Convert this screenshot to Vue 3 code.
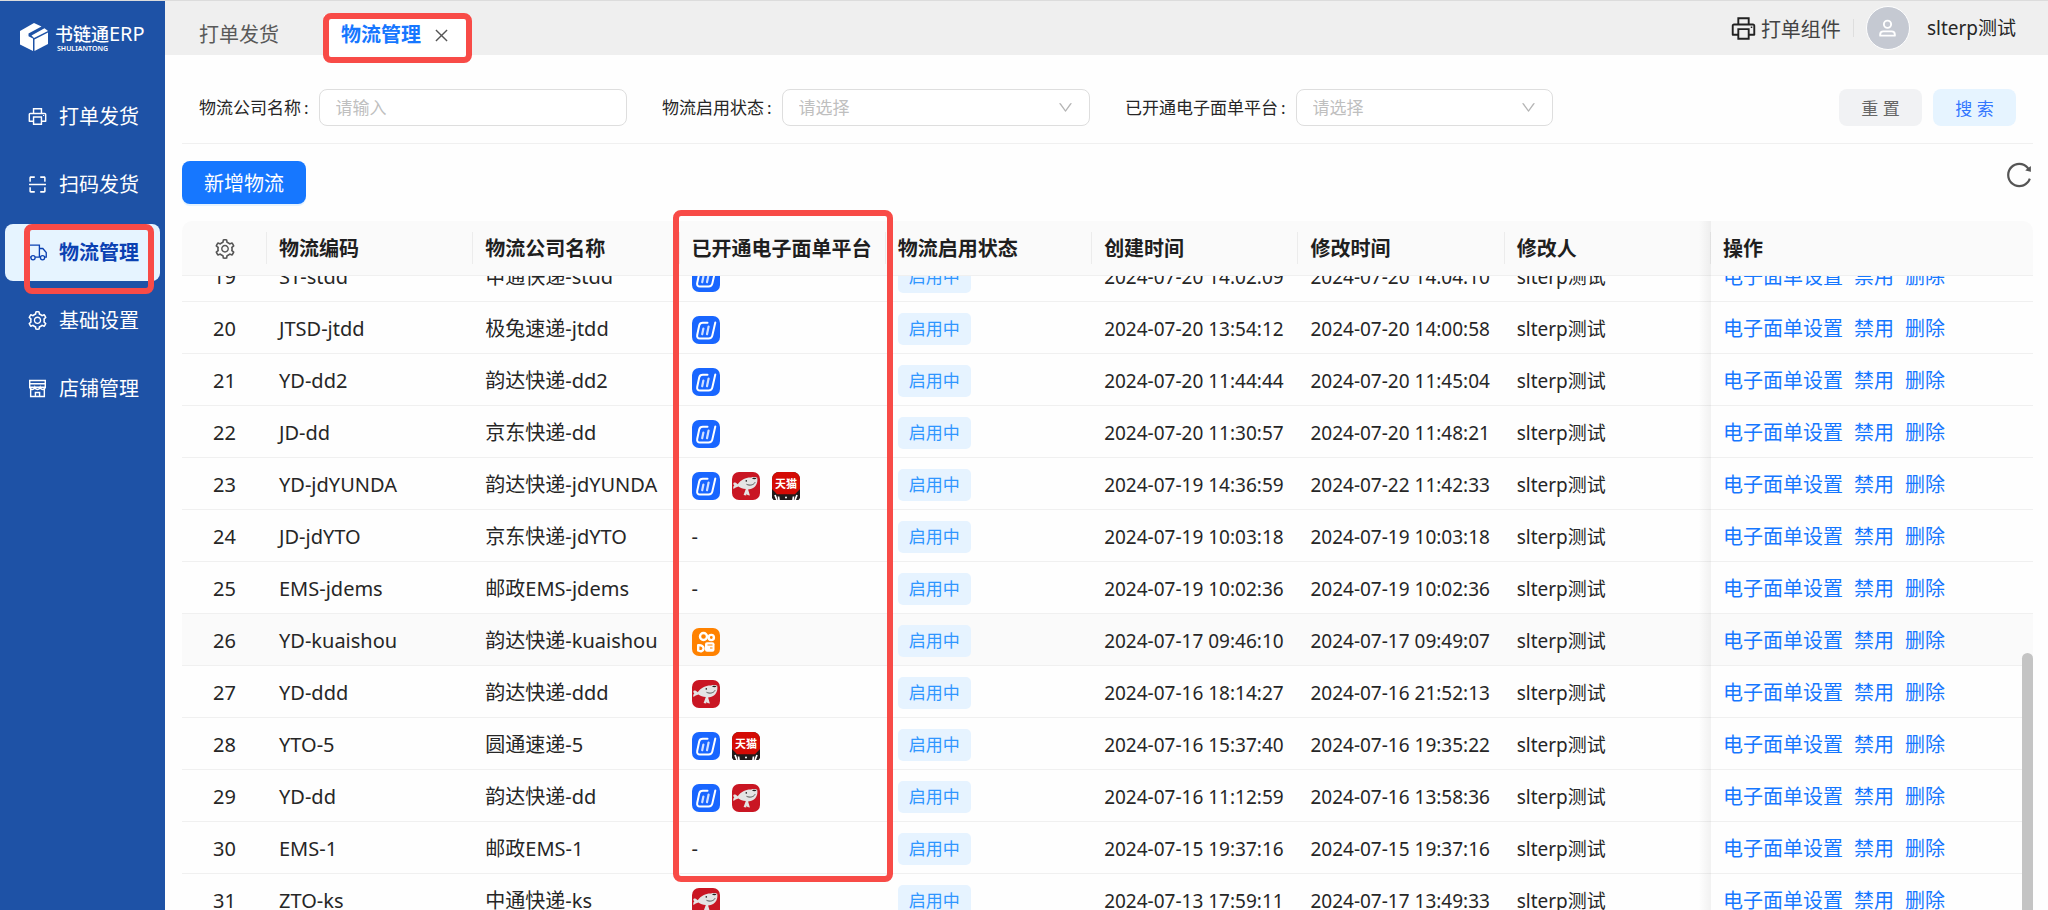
<script setup>
import { ref, onMounted } from 'vue'

const icons = {
  printer: 'M820 436h-40c-4.4 0-8 3.6-8 8v40c0 4.4 3.6 8 8 8h40c4.4 0 8-3.6 8-8v-40c0-4.4-3.6-8-8-8zm32-104H732V120c0-4.4-3.6-8-8-8H300c-4.4 0-8 3.6-8 8v212H172c-44.2 0-80 35.8-80 80v328c0 17.7 14.3 32 32 32h168v132c0 4.4 3.6 8 8 8h424c4.4 0 8-3.6 8-8V772h168c17.7 0 32-14.3 32-32V412c0-44.2-35.8-80-80-80zM360 180h304v152H360V180zm304 664H360V568h304v276zm200-140H732V500H292v204H160V412c0-6.6 5.4-12 12-12h680c6.6 0 12 5.4 12 12v292z',
  scan: 'M136 384h56c4.4 0 8-3.6 8-8V200h176c4.4 0 8-3.6 8-8v-56c0-4.4-3.6-8-8-8H196c-37.6 0-68 30.4-68 68v180c0 4.4 3.6 8 8 8zm512-184h176v176c0 4.4 3.6 8 8 8h56c4.4 0 8-3.6 8-8V196c0-37.6-30.4-68-68-68H648c-4.4 0-8 3.6-8 8v56c0 4.4 3.6 8 8 8zM376 824H200V648c0-4.4-3.6-8-8-8h-56c-4.4 0-8 3.6-8 8v180c0 37.6 30.4 68 68 68h180c4.4 0 8-3.6 8-8v-56c0-4.4-3.6-8-8-8zm512-184h-56c-4.4 0-8 3.6-8 8v176H648c-4.4 0-8 3.6-8 8v56c0 4.4 3.6 8 8 8h180c37.6 0 68-30.4 68-68V648c0-4.4-3.6-8-8-8zm16-164H120c-4.4 0-8 3.6-8 8v56c0 4.4 3.6 8 8 8h784c4.4 0 8-3.6 8-8v-56c0-4.4-3.6-8-8-8z',
  setting: 'M924.8 625.7l-65.5-56c3.1-19 4.7-38.4 4.7-57.8s-1.6-38.8-4.7-57.8l65.5-56a32.03 32.03 0 009.3-35.2l-.9-2.6a443.74 443.74 0 00-79.7-137.9l-1.8-2.1a32.12 32.12 0 00-35.1-9.5l-81.3 28.9c-30-24.6-63.5-44-99.7-57.6l-15.7-85a32.05 32.05 0 00-25.8-25.7l-2.7-.5c-52.1-9.4-106.9-9.4-159 0l-2.7.5a32.05 32.05 0 00-25.8 25.7l-15.8 85.4a351.86 351.86 0 00-99 57.4l-81.9-29.1a32 32 0 00-35.1 9.5l-1.8 2.1a446.02 446.02 0 00-79.7 137.9l-.9 2.6c-4.5 12.5-.8 26.5 9.3 35.2l66.3 56.6c-3.1 18.8-4.6 38-4.6 57.1 0 19.2 1.5 38.4 4.6 57.1L99 625.5a32.03 32.03 0 00-9.3 35.2l.9 2.6c18.1 50.4 44.9 96.9 79.7 137.9l1.8 2.1a32.12 32.12 0 0035.1 9.5l81.9-29.1c29.8 24.5 63.1 43.9 99 57.4l15.8 85.4a32.05 32.05 0 0025.8 25.7l2.7.5a449.4 449.4 0 00159 0l2.7-.5a32.05 32.05 0 0025.8-25.7l15.7-85a350 350 0 0099.7-57.6l81.3 28.9a32 32 0 0035.1-9.5l1.8-2.1c34.8-41.1 61.6-87.5 79.7-137.9l.9-2.6c4.5-12.3.8-26.3-9.3-35zM788.3 465.9c2.5 15.1 3.8 30.6 3.8 46.1s-1.3 31-3.8 46.1l-6.6 40.1 74.7 63.9a370.03 370.03 0 01-42.6 73.6L721 702.8l-31.4 25.8c-23.9 19.6-50.5 35-79.3 45.8l-38.1 14.3-17.9 97a377.5 377.5 0 01-85 0l-17.9-97.2-37.8-14.5c-28.5-10.8-55-26.2-78.7-45.7l-31.4-25.9-93.4 33.2c-17-22.9-31.2-47.6-42.6-73.6l75.5-64.5-6.5-40c-2.4-14.9-3.7-30.3-3.7-45.5 0-15.3 1.2-30.6 3.7-45.5l6.5-40-75.5-64.5c11.3-26.1 25.6-50.7 42.6-73.6l93.4 33.2 31.4-25.9c23.7-19.5 50.2-34.9 78.7-45.7l37.9-14.3 17.9-97.2c28.1-3.2 56.8-3.2 85 0l17.9 97 38.1 14.3c28.7 10.8 55.4 26.2 79.3 45.8l31.4 25.8 92.8-32.9c17 22.9 31.2 47.6 42.6 73.6L781.8 426l6.5 39.9zM512 326c-97.2 0-176 78.8-176 176s78.8 176 176 176 176-78.8 176-176-78.8-176-176-176zm79.2 255.2A111.6 111.6 0 01512 614c-29.9 0-58-11.7-79.2-32.8A111.6 111.6 0 01400 502c0-29.9 11.7-58 32.8-79.2C454 401.6 482.1 390 512 390c29.9 0 58 11.6 79.2 32.8A111.6 111.6 0 01624 502c0 29.9-11.7 58-32.8 79.2z',
  reload: 'M909.1 209.3l-56.4 44.1C775.8 155.1 656.2 92 521.9 92 290 92 102.3 279.5 102 511.5 101.7 743.7 289.8 932 521.9 932c181.3 0 335.8-115 394.6-276.1 1.5-4.2-.7-8.9-4.9-10.3l-56.7-19.5a8 8 0 00-10.1 4.8c-1.8 5-3.8 10-5.9 14.9-17.3 41-42.1 77.8-73.7 109.4A344.77 344.77 0 01655.9 829c-42.3 17.9-87.4 27-133.8 27-46.5 0-91.5-9.1-133.8-27A341.5 341.5 0 01279 755.2a342.16 342.16 0 01-73.7-109.4c-17.9-42.4-27-87.4-27-133.9s9.1-91.5 27-133.9c17.3-41 42.1-77.8 73.7-109.4 31.6-31.6 68.4-56.4 109.3-73.8 42.3-17.9 87.4-27 133.8-27 46.5 0 91.5 9.1 133.8 27a341.5 341.5 0 01109.3 73.8c9.9 9.9 19.2 20.4 27.8 31.4l-60.2 47a8 8 0 003 14.1l175.6 43c5 1.2 9.9-2.6 9.9-7.7l.8-180.9c-.1-6.6-7.8-10.3-13-6.2z',
  down: 'M884 256h-75c-5.1 0-9.9 2.5-12.9 6.6L512 654.2 227.9 262.6c-3-4.1-7.8-6.6-12.9-6.6h-75c-6.5 0-10.3 7.4-6.5 12.7l352.6 486.1c12.8 17.6 39 17.6 51.7 0l352.6-486.1c3.9-5.3.1-12.7-6.4-12.7z',
}

const menu = [
  { label: '打单发货', icon: 'printer' },
  { label: '扫码发货', icon: 'scan' },
  { label: '物流管理', icon: 'truck', active: true },
  { label: '基础设置', icon: 'setting' },
  { label: '店铺管理', icon: 'shop' },
]

const columns = ['物流编码', '物流公司名称', '已开通电子面单平台', '物流启用状态', '创建时间', '修改时间', '修改人']

const rows = [
  [19, 'ST-stdd', '申通快递-stdd', ['dd'], '2024-07-20 14:02:09', '2024-07-20 14:04:10'],
  [20, 'JTSD-jtdd', '极兔速递-jtdd', ['dd'], '2024-07-20 13:54:12', '2024-07-20 14:00:58'],
  [21, 'YD-dd2', '韵达快递-dd2', ['dd'], '2024-07-20 11:44:44', '2024-07-20 11:45:04'],
  [22, 'JD-dd', '京东快递-dd', ['dd'], '2024-07-20 11:30:57', '2024-07-20 11:48:21'],
  [23, 'YD-jdYUNDA', '韵达快递-jdYUNDA', ['dd', 'jd', 'tm'], '2024-07-19 14:36:59', '2024-07-22 11:42:33'],
  [24, 'JD-jdYTO', '京东快递-jdYTO', [], '2024-07-19 10:03:18', '2024-07-19 10:03:18'],
  [25, 'EMS-jdems', '邮政EMS-jdems', [], '2024-07-19 10:02:36', '2024-07-19 10:02:36'],
  [26, 'YD-kuaishou', '韵达快递-kuaishou', ['ks'], '2024-07-17 09:46:10', '2024-07-17 09:49:07'],
  [27, 'YD-ddd', '韵达快递-ddd', ['jd'], '2024-07-16 18:14:27', '2024-07-16 21:52:13'],
  [28, 'YTO-5', '圆通速递-5', ['dd', 'tm'], '2024-07-16 15:37:40', '2024-07-16 19:35:22'],
  [29, 'YD-dd', '韵达快递-dd', ['dd', 'jd'], '2024-07-16 11:12:59', '2024-07-16 13:58:36'],
  [30, 'EMS-1', '邮政EMS-1', [], '2024-07-15 19:37:16', '2024-07-15 19:37:16'],
  [31, 'ZTO-ks', '中通快递-ks', ['jd'], '2024-07-13 17:59:11', '2024-07-17 13:49:33'],
].map(([no, code, name, platforms, created, updated]) => ({ no, code, name, platforms, created, updated }))

const actions = ['电子面单设置', '禁用', '删除']
const keyword = ref('')
const status = ref('')
const platform = ref('')
const body = ref(null)

onMounted(() => {
  body.value.scrollTop = 26
})
</script>

<template>
  <div class="layout">
    <aside class="sidebar">
      <div class="logo">
        <svg class="logo-mark" viewBox="0 0 28 28" aria-hidden="true">
          <path d="M0 8 14 0l7.500 3.500L8.500 10.500v3.300L0 10z" fill="#fff" />
          <path d="M0 9 13 15.500V28L0 21.500z" fill="#fff" />
          <path d="M14.500 16.500 28 9.500V21L14.500 28z" fill="#fff" />
          <path d="M11.500 12.500 24.500 5.300 28 8 14 15z" fill="#fff" />
        </svg>
        <div class="logo-text">
          <div class="logo-name">书链通<span>ERP</span></div>
          <div class="logo-sub">SHULIANTONG</div>
        </div>
      </div>
      <nav class="menu">
        <a v-for="m in menu" :key="m.label" href="#" class="menu-item" :class="{ active: m.active }">
          <svg v-if="m.icon === 'truck'" class="icon" viewBox="0 0 20 20" fill="none" stroke="currentColor" stroke-width="1.4" aria-hidden="true">
            <path d="M3 14.800H1V2.200h11v12.600H7.600M12 5.800h3.600L19.200 10v4.800h-1.600M13 14.800h-1" />
            <circle cx="5.300" cy="15.500" r="2.200" /><circle cx="15.300" cy="15.500" r="2.200" />
          </svg>
          <svg v-else-if="m.icon === 'shop'" class="icon" viewBox="0 0 20 20" fill="none" stroke="currentColor" stroke-width="1.500" aria-hidden="true">
            <path d="M1.800 1.500h16.400v7.200H1.800zM1.800 5h16.400M2.800 8.700v9.800h14.400V8.700M7.800 18.500v-4.200h4.400v4.200" />
            <path d="M1.800 8.700c.6 3 4.600 3 5.400.3.800 2.700 4.800 2.700 5.600 0 .8 2.700 4.800 2.700 5.400-.3" />
          </svg>
          <svg v-else class="icon" viewBox="64 64 896 896" fill="currentColor" aria-hidden="true"><path :d="icons[m.icon]" /></svg>
          <span>{{ m.label }}</span>
          <i v-if="m.active" class="mark mark-menu"></i>
        </a>
      </nav>
    </aside>

    <main class="main">
      <header class="topbar">
        <div class="tabs">
          <a href="#" class="tab">打单发货</a>
          <div class="tab current">
            <a href="#">物流管理</a>
            <button type="button" class="close" aria-label="关闭">
              <svg viewBox="0 0 14 14" fill="none" stroke="currentColor" stroke-width="1.500"><path d="M1 1l12 12M13 1 1 13" /></svg>
            </button>
            <i class="mark mark-tab"></i>
          </div>
        </div>
        <div class="user-area">
          <button type="button" class="print">
            <svg viewBox="64 64 896 896" fill="#222" aria-hidden="true"><path :d="icons.printer" /></svg>
            打单组件
          </button>
          <i class="sep"></i>
          <span class="avatar">
            <svg viewBox="0 0 20 20" fill="none" stroke="#fff" stroke-width="2" aria-hidden="true">
              <circle cx="10" cy="5.500" r="3.800" /><path d="M2.300 17.500v-1.200c0-2 1.400-3.300 3.400-3.300h8.600c2 0 3.400 1.300 3.400 3.300v1.200z" stroke-linejoin="round" />
            </svg>
          </span>
          <span class="user">slterp测试</span>
        </div>
      </header>

      <form class="filters" @submit.prevent>
        <div class="field">
          <label for="f-name">物流公司名称<span>:</span></label>
          <input id="f-name" v-model="keyword" type="text" placeholder="请输入" />
        </div>
        <div class="field">
          <label for="f-status">物流启用状态<span>:</span></label>
          <div class="select">
            <select id="f-status" v-model="status"><option value="">请选择</option><option>启用中</option></select>
            <svg viewBox="64 64 896 896" fill="currentColor" aria-hidden="true"><path :d="icons.down" /></svg>
          </div>
        </div>
        <div class="field">
          <label for="f-platform">已开通电子面单平台<span>:</span></label>
          <div class="select">
            <select id="f-platform" v-model="platform"><option value="">请选择</option></select>
            <svg viewBox="64 64 896 896" fill="currentColor" aria-hidden="true"><path :d="icons.down" /></svg>
          </div>
        </div>
        <div class="filter-actions">
          <button type="reset" class="btn reset">重 置</button>
          <button type="submit" class="btn search">搜 索</button>
        </div>
      </form>

      <div class="toolbar">
        <button type="button" class="add">新增物流</button>
        <button type="button" class="reload" aria-label="刷新">
          <svg viewBox="64 64 896 896" fill="currentColor"><path :d="icons.reload" /></svg>
        </button>
      </div>

      <section class="grid">
        <table class="head">
          <colgroup><col class="c-no" /><col v-for="c in columns" :key="c" /><col class="c-act" /></colgroup>
          <thead>
            <tr>
              <th class="no" aria-label="列设置"><svg viewBox="64 64 896 896" fill="#555"><path :d="icons.setting" /></svg></th>
              <th v-for="c in columns" :key="c">{{ c }}</th>
              <th class="act">操作</th>
            </tr>
          </thead>
        </table>
        <div ref="body" class="body">
          <table>
            <colgroup><col class="c-no" /><col v-for="c in columns" :key="c" /><col class="c-act" /></colgroup>
            <tbody>
              <tr v-for="r in rows" :key="r.no" :class="{ hover: r.no === 26 }">
                <td class="no">{{ r.no }}</td>
                <td>{{ r.code }}</td>
                <td>{{ r.name }}</td>
                <td>
                  <div v-if="r.platforms.length" class="badges">
                    <template v-for="p in r.platforms" :key="p">
                      <svg v-if="p === 'dd'" viewBox="0 0 28 28">
                        <rect width="28" height="28" rx="7" fill="#1966ff" />
                        <path d="M15.500 6.800H10.800c-2 0-3.200.9-3.600 2.700L5.200 19c-.4 2.200.6 3.500 2.800 3.500h8.600c2 0 3.300-1 3.700-2.900L23.300 6.500" fill="none" stroke="#fff" stroke-width="2" stroke-linecap="round" />
                        <path d="M11.400 12.500l-1.200 5.700M16.600 10.500 15 18.200" fill="none" stroke="#fff" stroke-width="2.200" stroke-linecap="round" opacity=".8" />
                      </svg>
                      <svg v-else-if="p === 'jd'" viewBox="0 0 28 28">
                        <rect width="28" height="28" rx="7" fill="#c91623" />
                        <path d="M1.500 11c1-.8 2.600-.4 4.200 1.200C9 7.400 14 5.200 19 5.400c2.300-.6 5-.6 6.200.3.800 4.300-.6 8-3.700 10-2 1.300-3.700 1.500-5.400 1.700l1.800 6.200-2.500-.6-.6-1.300-.7 1.900-2.500-.6 2.200-6c-3-.2-5.300-1-7.400-2.600-1.800.9-3.600 1-4.900 2.700-.5-1.500-.2-3 .8-3.800-.9-.6-1.300-1.400-.8-2.300z" fill="#e4e4e4" />
                        <path d="M20 6.200c1.700-.7 3.900-.6 4.500 0-.9 1.200-3.100 1.500-4.500 0z" fill="#222" />
                        <circle cx="14.300" cy="8.900" r=".8" fill="#222" />
                        <path d="M14.500 12.300c3.300 1.600 7 .8 8.600-2" fill="none" stroke="#444" stroke-width=".9" />
                      </svg>
                      <svg v-else-if="p === 'tm'" viewBox="0 0 28 28">
                        <path d="M0 7a7 7 0 0 1 7-7h14a7 7 0 0 1 7 7v19l-1.500 2h-25L0 26z" fill="#231a1a" />
                        <path d="M0 7a7 7 0 0 1 7-7h14a7 7 0 0 1 7 7v10l-5 5.300H5L0 17z" fill="#d40b05" />
                        <path d="M3 23l2 5M6.500 24.500 7 28M21.500 24.500 21 28M25 23l-2 5" stroke="#fff" stroke-width="1.700" />
                        <circle cx="14" cy="25.500" r="1" fill="#fff" />
                        <text x="14" y="15.500" text-anchor="middle" font-size="11" font-weight="700" fill="#fff">天猫</text>
                      </svg>
                      <svg v-else viewBox="0 0 28 28">
                        <rect width="28" height="28" rx="7" fill="#ff8200" />
                        <g fill="none" stroke="#fff" stroke-width="2.400">
                          <circle cx="11.500" cy="8.500" r="3.500" /><circle cx="19.300" cy="9.500" r="2.600" />
                          <path d="M6.200 17.200v5.300c2.500 1.300 5 .7 5.400-1.700.3-2.500-2.200-4-5.400-3.600z" stroke-linejoin="round" />
                        </g>
                        <rect x="13" y="14.300" width="9.500" height="9.500" rx="2" fill="#fff" />
                        <path d="M15.500 17h5M18 20h2.500" stroke="#ff8200" stroke-width="1" />
                      </svg>
                    </template>
                  </div>
                  <template v-else>-</template>
                </td>
                <td><span class="tag">启用中</span></td>
                <td class="latin">{{ r.created }}</td>
                <td class="latin">{{ r.updated }}</td>
                <td class="latin">slterp测试</td>
                <td class="act">
                  <div class="links"><a v-for="a in actions" :key="a" href="#">{{ a }}</a></div>
                </td>
              </tr>
            </tbody>
          </table>
        </div>
        <i class="thumb"></i>
        <i class="mark mark-column"></i>
      </section>
    </main>
  </div>
</template>

<style>
body {
  margin: 0;
  overflow: hidden;
}
</style>

<style scoped>
.layout,
.layout * {
  box-sizing: border-box;
}
.layout {
  display: flex;
  height: 100vh;
  border-top: 1px solid #dcdcdc;
  background: #fefefe;
  color: #262626;
  font-family: "Noto Sans", "Noto Sans CJK SC", sans-serif;
  font-size: 20px;
  line-height: 28px;
}
a {
  color: inherit;
  text-decoration: none;
}
button,
input,
select {
  font-family: inherit;
  color: inherit;
}
button {
  border: 0;
  padding: 0;
  background: none;
  cursor: pointer;
}
svg {
  display: block;
  flex: none;
}
.mark {
  position: absolute;
  border: 6px solid #f84b47;
  border-radius: 8px;
  pointer-events: none;
  z-index: 5;
}

.sidebar {
  flex: none;
  width: 165px;
  background: #1e52a6;
  color: #fff;
}
.logo {
  display: flex;
  gap: 7px;
  height: 87px;
  padding: 22px 0 0 20px;
}
.logo-mark {
  width: 28px;
  height: 28px;
}
.logo-name {
  display: flex;
  align-items: center;
  height: 22px;
  font-size: 18px;
  font-weight: 500;
  line-height: 22px;
}
.logo-name span {
  font-size: 20px;
  font-weight: 400;
}
.logo-sub {
  padding-left: 2px;
  font-size: 7px;
  font-weight: 600;
  line-height: 8px;
}
.menu {
  display: flex;
  flex-direction: column;
  gap: 11px;
  padding: 0 5px;
}
.menu-item {
  position: relative;
  display: flex;
  align-items: center;
  gap: 12px;
  height: 57px;
  padding-left: 23px;
  border-radius: 8px;
}
.menu-item.active {
  background: #e6f4ff;
  color: #0b41b2;
  font-weight: 700;
}
.icon {
  width: 19px;
  height: 19px;
}
.mark-menu {
  top: 0;
  left: 19px;
  width: 130px;
  height: 70px;
}

.main {
  flex: 1;
  min-width: 0;
  display: flex;
  flex-direction: column;
}
.topbar {
  flex: none;
  display: flex;
  justify-content: space-between;
  height: 54px;
  padding: 0 32px 0 34px;
  background: #efefef;
}
.tabs {
  display: flex;
  gap: 45px;
  padding-top: 14px;
}
.tab {
  display: flex;
  align-items: center;
  height: 40px;
  color: #595959;
}
.tab.current {
  position: relative;
  gap: 14px;
  padding: 0 21px 0 17px;
  background: #fff;
  color: #1677ff;
  font-weight: 700;
}
.close {
  color: #555;
}
.close svg {
  width: 13px;
  height: 13px;
}
.mark-tab {
  inset: -2px -3px -8px -1px;
}
.user-area {
  display: flex;
  align-items: center;
  height: 54px;
}
.print {
  display: flex;
  align-items: center;
  gap: 5px;
  font-size: 20px;
  color: #434343;
}
.print svg {
  width: 25px;
  height: 25px;
}
.sep {
  width: 1px;
  height: 18px;
  margin: 0 12px;
  background: #dedede;
}
.avatar {
  display: flex;
  align-items: center;
  justify-content: center;
  width: 44px;
  height: 44px;
  margin-right: 17px;
  border: 1px solid #fff;
  border-radius: 50%;
  background: #c5c9d2;
}
.avatar svg {
  width: 19px;
  height: 19px;
}
.user {
  font-size: 19px;
}

.filters {
  flex: none;
  display: flex;
  gap: 35px;
  align-items: center;
  height: 89px;
  margin: 0 15px 0 17px;
  padding: 17px 17px 0;
  border-bottom: 1px solid #f0f0f0;
  font-size: 17px;
}
.field {
  flex: 0 1 428px;
  display: flex;
  align-items: center;
}
.field label {
  white-space: nowrap;
}
.field label span {
  margin: 0 10px 0 3px;
}
input,
select {
  flex: 1;
  width: 100%;
  min-width: 0;
  height: 37px;
  padding: 0 16px;
  border: 1px solid #dedede;
  border-radius: 8px;
  background: #fff;
  font-size: 17px;
}
input::placeholder {
  color: #bfbfbf;
}
select {
  appearance: none;
  color: #bfbfbf;
}
.select {
  position: relative;
  flex: 1;
  display: flex;
  min-width: 0;
}
.select svg {
  position: absolute;
  top: 11px;
  right: 17px;
  width: 15px;
  height: 15px;
  color: #b5b5b5;
  pointer-events: none;
}
.filter-actions {
  display: flex;
  gap: 11px;
  margin-left: auto;
}
.btn {
  width: 83px;
  height: 37px;
  border-radius: 8px;
  font-size: 17px;
}
.reset {
  background: #f1f2f4;
  color: #666;
}
.search {
  background: #e6f4ff;
  color: #3377ff;
}

.toolbar {
  flex: none;
  display: flex;
  justify-content: space-between;
  align-items: flex-start;
  height: 77px;
  padding: 17px 16px 0 17px;
}
.add {
  height: 43px;
  padding: 0 22px;
  border-radius: 8px;
  background: #1677ff;
  box-shadow: 0 2px 0 rgba(5, 145, 255, 0.1);
  color: #fff;
  font-size: 20px;
}
.reload {
  color: #555;
}
.reload svg {
  width: 26px;
  height: 28px;
}

.grid {
  position: relative;
  flex: 1;
  min-height: 0;
  display: flex;
  flex-direction: column;
  margin: 0 15px 0 17px;
}
table {
  width: 100%;
  table-layout: fixed;
  border-collapse: separate;
  border-spacing: 0;
}
.head {
  flex: none;
}
.c-no {
  width: 85px;
}
.c-act {
  width: 322px;
}
th,
td {
  position: relative;
  padding: 2px 0 0 12px;
  border-bottom: 1px solid #f0f0f0;
  text-align: left;
  white-space: nowrap;
}
th {
  height: 55px;
  background: #fafafa;
  color: #1f1f1f;
  font-weight: 700;
}
th:first-child {
  border-top-left-radius: 10px;
}
th:last-child {
  border-top-right-radius: 10px;
}
th:not(:last-child)::after {
  content: "";
  position: absolute;
  top: 11px;
  right: 0;
  width: 1px;
  height: 32px;
  background: #ececec;
}
td {
  height: 52px;
}
.no {
  padding-left: 0;
  text-align: center;
}
.no svg {
  width: 20px;
  height: 20px;
  margin: 0 auto;
}
.act::before {
  content: "";
  position: absolute;
  top: 0;
  bottom: -1px;
  left: -12px;
  width: 12px;
  background: linear-gradient(to right, rgba(5, 5, 5, 0), rgba(5, 5, 5, 0.05));
}
.body {
  flex: 1;
  min-height: 0;
  overflow-y: auto;
  scrollbar-width: none;
}
.hover td {
  background: #fafafa;
}
.latin {
  font-size: 19px;
}
.badges {
  display: flex;
  gap: 12px;
  padding-top: 2px;
}
.badges svg {
  width: 28px;
  height: 28px;
}
.tag {
  display: inline-block;
  height: 32px;
  padding: 0 11px;
  border-radius: 5px;
  background: #e6f3ff;
  color: #2f96ff;
  font-size: 17px;
  line-height: 32px;
  vertical-align: middle;
}
.links {
  display: flex;
  gap: 11px;
  color: #1677ff;
}
.thumb {
  position: absolute;
  top: 432px;
  right: 0;
  bottom: 0;
  width: 11px;
  border-radius: 6px 6px 0 0;
  background: #c4c4c4;
}
.mark-column {
  top: -11px;
  left: calc(78px + (100% - 407px) * 2 / 7);
  width: calc((100% - 407px) / 7 + 14px);
  height: 672px;
}
</style>
